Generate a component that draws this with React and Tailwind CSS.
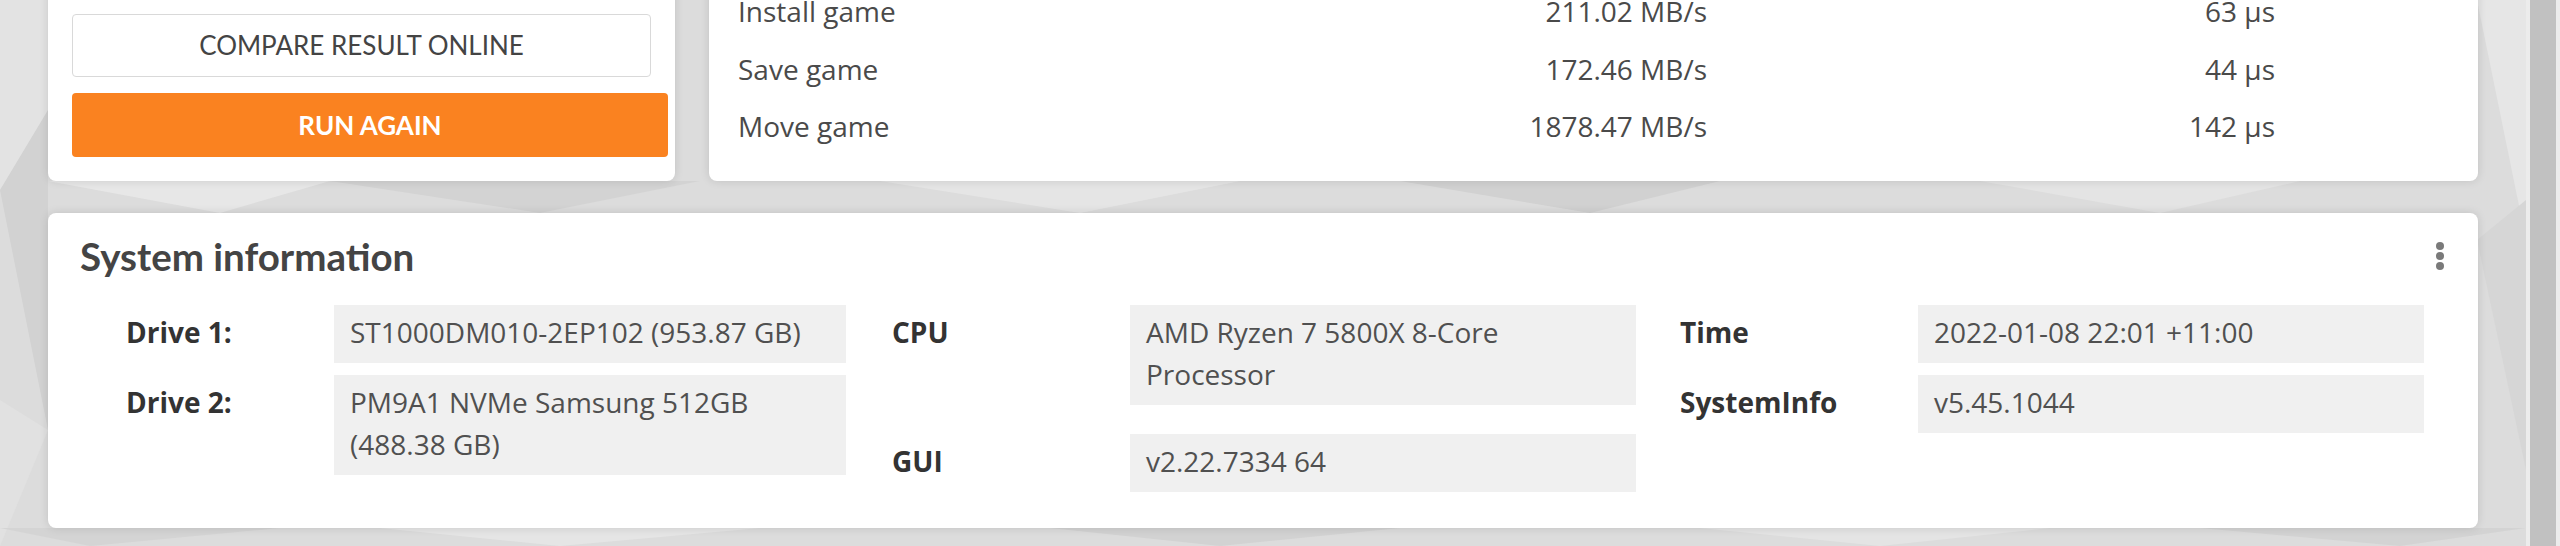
const shards = [
  ['0,0 140,0 0,190', '#e3e3e3'],
  ['0,190 48,110 48,430', '#d2d2d2'],
  ['0,400 48,430 0,546', '#e1e1e1'],
  ['48,181 330,181 220,213', '#e7e7e7'],
  ['330,181 700,181 540,213', '#d3d3d3'],
  ['880,181 1240,181 1080,213', '#e5e5e5'],
  ['1400,181 1720,181 1590,213', '#d1d1d1'],
  ['1980,181 2300,181 2160,213', '#e4e4e4'],
  ['2477,0 2526,0 2526,240', '#e6e6e6'],
  ['2477,240 2526,200 2526,470', '#d6d6d6'],
  ['0,528 280,528 90,546', '#d4d4d4'],
  ['380,528 760,528 560,546', '#e5e5e5'],
  ['1050,528 1400,528 1220,546', '#d2d2d2'],
  ['1700,528 2050,528 1880,546', '#e4e4e4'],
  ['2200,528 2526,528 2400,546', '#d3d3d3'],
];

const results = [
  ['Install game', '211.02 MB/s', '63 µs'],
  ['Save game', '172.46 MB/s', '44 µs'],
  ['Move game', '1878.47 MB/s', '142 µs'],
];

function InfoRow({ label, value, labelWidth, boxWidth, className = '' }) {
  return (
    <div className={`flex ${className}`}>
      <div className="pb-[10px] pt-[6px] font-bold leading-[42px] text-[#333]" style={{ width: labelWidth }}>{label}</div>
      <div className="bg-[#f0f0f0] px-4 pb-[10px] pt-[6px] leading-[42px] text-[#505050]" style={{ width: boxWidth }}>{value}</div>
    </div>
  );
}

export default function App() {
  return (
    <div className="flex h-[546px] w-full overflow-hidden bg-[#dcdcdc] font-['Open_Sans',sans-serif] text-[28px]">
      <div className="relative min-w-0 flex-1">
        <svg className="absolute inset-0 h-full w-full" viewBox="0 0 2526 546" preserveAspectRatio="none">
          {shards.map(([points, fill]) => (
            <polygon key={points} points={points} fill={fill} />
          ))}
        </svg>

        <div className="relative px-[48px]">
          <div className="-mt-[20px] flex h-[201px] gap-[34px]">
            <div className="flex w-[627px] shrink-0 flex-col justify-end gap-4 rounded-b-lg bg-white px-6 pb-6 shadow-[0_0_10px_rgba(0,0,0,0.12)]">
              <button className="h-[63px] w-[579px] rounded border border-[#d9d9d9] bg-white font-['Lato',sans-serif] text-[26px] text-[#444]">
                COMPARE RESULT ONLINE
              </button>
              <button className="h-[64px] w-[596px] rounded bg-[#fa8220] font-['Lato',sans-serif] text-[26px] font-bold text-white">
                RUN AGAIN
              </button>
            </div>

            <div className="flex flex-1 flex-col justify-end rounded-b-lg bg-white pb-[26px] pl-[29px] pr-[203px] text-[#4a4a4a] shadow-[0_0_10px_rgba(0,0,0,0.12)]">
              {results.map(([name, speed, latency]) => (
                <div key={name} className="flex h-[57.5px] items-center">
                  <div className="flex-1">{name}</div>
                  <div className="w-[300px] text-right">{speed}</div>
                  <div className="w-[568px] text-right">{latency}</div>
                </div>
              ))}
            </div>
          </div>

          <section className="relative mt-[32px] h-[315px] rounded-lg bg-white pl-[32px] pt-[21px] shadow-[0_0_10px_rgba(0,0,0,0.12)]">
            <h2 className="font-['Lato',sans-serif] text-[38.5px] font-bold leading-[44px] text-[#444]">System information</h2>
            <svg className="absolute right-[34px] top-[29px] h-[28px] w-[8px]" viewBox="0 0 8 28" fill="#7a7a7a">
              <circle cx="4" cy="4" r="4" />
              <circle cx="4" cy="14" r="4" />
              <circle cx="4" cy="24" r="4" />
            </svg>

            <div className="ml-[46px] mt-[27px] flex">
              <div className="flex flex-col gap-3">
                <InfoRow label="Drive 1:" value="ST1000DM010-2EP102 (953.87 GB)" labelWidth={208} boxWidth={512} />
                <InfoRow label="Drive 2:" value="PM9A1 NVMe Samsung 512GB (488.38 GB)" labelWidth={208} boxWidth={512} />
              </div>
              <div className="ml-[46px] flex flex-col">
                <InfoRow label="CPU" value="AMD Ryzen 7 5800X 8-Core Processor" labelWidth={238} boxWidth={506} />
                <InfoRow label="GUI" value="v2.22.7334 64" labelWidth={238} boxWidth={506} className="mt-[29px]" />
              </div>
              <div className="ml-[44px] flex flex-col gap-3">
                <InfoRow label="Time" value="2022-01-08 22:01 +11:00" labelWidth={238} boxWidth={506} />
                <InfoRow label="SystemInfo" value="v5.45.1044" labelWidth={238} boxWidth={506} />
              </div>
            </div>
          </section>
        </div>
      </div>

      <div className="w-[34px] shrink-0 bg-[#ececec] px-[4px]">
        <div className="h-full bg-[#c1c1c1]" />
      </div>
    </div>
  );
}
